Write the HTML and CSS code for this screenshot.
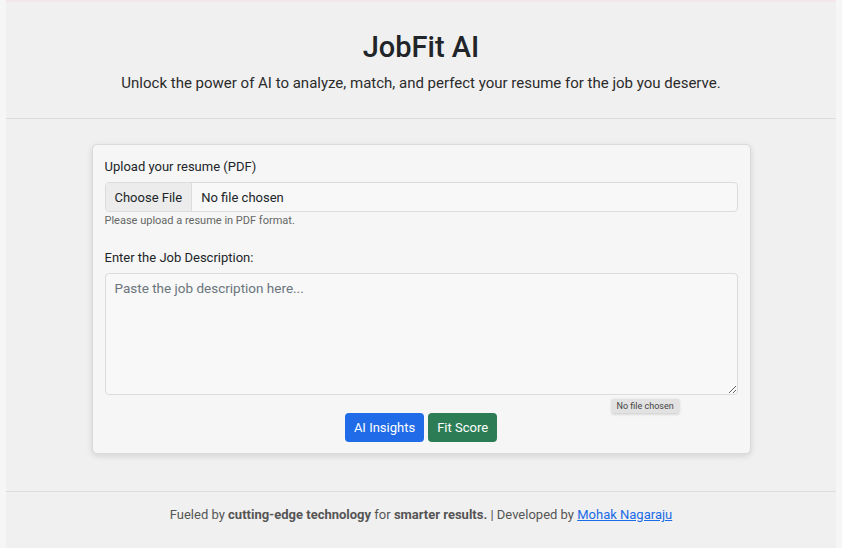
FILE: index.html
```html
<!DOCTYPE html>
<html lang="en">

<head>
  <meta charset="UTF-8">
  <title>JobFit AI</title>
  <meta name="viewport" content="width=device-width, initial-scale=1.0">
  <link rel="stylesheet" href="styles.css">
</head>

<body>
  <div class="page">
    <header class="header">
      <h1>JobFit AI</h1>
      <p class="lead">Unlock the power of AI to analyze, match, and perfect your resume for the job you deserve.</p>
    </header>

    <main class="main">
      <form class="card">
        <label class="label">Upload your resume (PDF)</label>
        <div class="file">
          <span class="file-btn">Choose File</span>
          <span class="file-name">No file chosen</span>
        </div>
        <small class="hint">Please upload a resume in PDF format.</small>

        <label class="label label-gap">Enter the Job Description:</label>
        <div class="area-wrap">
          <textarea class="area" placeholder="Paste the job description here..."></textarea>
          <span class="tip">No file chosen</span>
        </div>

        <div class="actions">
          <button type="button" class="btn btn-blue">AI Insights</button>
          <button type="button" class="btn btn-green">Fit Score</button>
        </div>
      </form>
    </main>

    <footer class="footer">
      <p>Fueled by <b>cutting-edge technology</b> for <b>smarter results.</b> | Developed by <a href="#">Mohak Nagaraju</a></p>
    </footer>
  </div>
</body>

</html>
```

FILE: styles.css
```css
* {
  margin: 0;
  padding: 0;
  box-sizing: border-box;
}

body {
  background: #f5f6f5;
  font-family: Roboto, "Liberation Sans", sans-serif;
  color: #212529;
  height: 100vh;
  overflow: hidden;
}

.page {
  margin: 0 6px;
  background: #f0f0f0;
  border-top: 2px solid #f3e7eb;
  min-height: 100vh;
}

.header {
  text-align: center;
  padding: 28px 0 24px;
  border-bottom: 1px solid #dcdcdc;
}

.header h1 {
  font-size: 29px;
  font-weight: 500;
  line-height: 34px;
}

.lead {
  margin-top: 8px;
  font-size: 15px;
  line-height: 22px;
  color: #2b2b2b;
}

.main {
  padding: 25px 0 37px;
}

.card {
  width: 659px;
  margin: 0 auto;
  background: #f5f6f5;
  border: 1px solid #dadada;
  border-radius: 5px;
  box-shadow: 0 2px 6px rgba(0, 0, 0, 0.12);
  padding: 12px 12px 11px;
  display: flex;
  flex-direction: column;
}

.label {
  font-size: 13px;
  line-height: 19px;
  color: #212529;
  margin-bottom: 6px;
}

.label-gap {
  margin-top: 20px;
}

.file {
  display: flex;
  height: 30px;
  border: 1px solid #dcdcdc;
  border-radius: 4px;
  overflow: hidden;
  font-size: 13px;
  background: #f7f8f7;
}

.file-btn {
  display: flex;
  align-items: center;
  padding: 0 9px;
  background: #ececec;
  border-right: 1px solid #dcdcdc;
}

.file-name {
  display: flex;
  align-items: center;
  padding: 0 9px;
}

.hint {
  margin-top: 2px;
  font-size: 11px;
  line-height: 14px;
  color: #666;
}

.area-wrap {
  position: relative;
}

.area {
  display: block;
  width: 100%;
  height: 122px;
  border: 1px solid #dcdcdc;
  border-radius: 4px;
  background: #f7f8f7;
  padding: 6px 9px;
  font-family: inherit;
  font-size: 13.5px;
  resize: vertical;
}

.area::placeholder {
  color: #6c757d;
}

.tip {
  position: absolute;
  left: 507px;
  top: 126px;
  padding: 1px 5px;
  font-size: 9px;
  line-height: 12px;
  color: #444;
  background: #e2e2e2;
  box-shadow: 0 1px 3px rgba(0, 0, 0, 0.2);
}

.actions {
  display: flex;
  justify-content: center;
  gap: 4px;
  margin-top: 18px;
}

.btn {
  height: 29px;
  padding: 0 9px;
  border: none;
  border-radius: 4px;
  color: #fff;
  font-family: inherit;
  font-size: 13px;
}

.btn-blue {
  background: #1f6be8;
}

.btn-green {
  background: #2c7d55;
}

.footer {
  border-top: 1px solid #dcdcdc;
  text-align: center;
  padding: 15px 0 30px;
  font-size: 13px;
  color: #555;
}

.footer a {
  color: #1a6be6;
}
```
